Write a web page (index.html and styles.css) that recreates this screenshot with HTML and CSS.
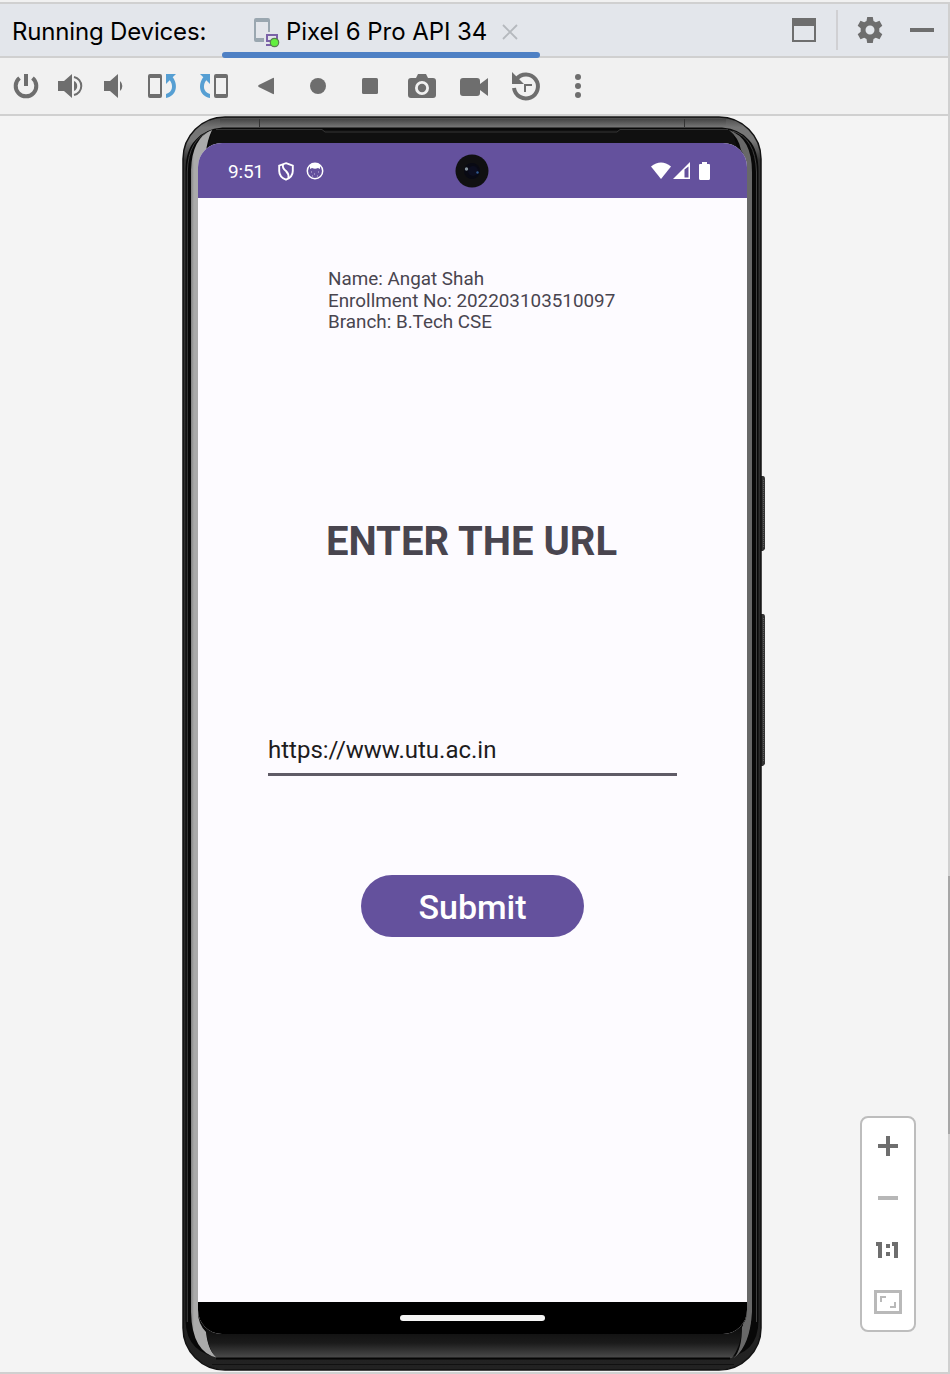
FILE: index.html
```html
<!DOCTYPE html>
<html lang="en">
<head>
<meta charset="utf-8">
<title>Running Devices</title>
<link rel="stylesheet" href="styles.css">
</head>
<body>
<div class="window">
  <header class="header">
    <span class="title">Running Devices:</span>
    <div class="tab">
      <svg class="tab-device" width="28" height="32" viewBox="0 0 28 32">
        <path d="M4 2h12a2 2 0 0 1 2 2v12h-2V6H4v16h8v4H4a2 2 0 0 1-2-2V4a2 2 0 0 1 2-2z" fill="#9aa7b0"/>
        <path d="M14 18h12v8H14zM16 20v4h8v-4zM14 28h6v2h-6z" fill="#7b62a8" fill-rule="evenodd"/>
        <circle cx="22.500" cy="26.500" r="4.200" fill="#62ef3f" stroke="#5b7c52" stroke-width="1.200"/>
      </svg>
      <span class="tab-label">Pixel 6 Pro API 34</span>
      <svg class="close" width="16" height="16" viewBox="0 0 16 16"><path d="M1 1l14 14M15 1L1 15" stroke="#b5b9be" stroke-width="1.800"/></svg>
    </div>
    <div class="header-actions">
      <svg width="24" height="24" viewBox="0 0 24 24"><path d="M0 0h24v24H0zM2 8v14h20V8z" fill="#6e6e6e" fill-rule="evenodd"/></svg>
      <span class="divider"></span>
      <svg width="28" height="28" viewBox="0 0 28 28"><path fill="#6e6e6e" fill-rule="evenodd" d="M11.200 1h5.600l.7 3.900 2.300 1.300 3.700-1.400 2.800 4.900-3 2.500v3.600l3 2.500-2.800 4.900-3.700-1.400-2.300 1.300-.7 3.900h-5.600l-.7-3.900-2.300-1.300-3.700 1.400-2.800-4.900 3-2.500v-3.600l-3-2.500 2.800-4.900 3.700 1.400 2.300-1.300zM14 9.500a4.500 4.500 0 1 0 0 9 4.500 4.500 0 0 0 0-9z"/></svg>
      <svg class="minimize" width="24" height="4" viewBox="0 0 24 4"><path d="M0 0h24v4H0z" fill="#6e6e6e"/></svg>
    </div>
  </header>

  <nav class="toolbar">
    <svg width="28" height="28" viewBox="0 0 28 28"><path d="M7.500 6A10.300 10.300 0 1 0 20.500 6" fill="none" stroke="#6e6e6e" stroke-width="4"/><path d="M12 2h4v12h-4z" fill="#6e6e6e"/></svg>
    <svg class="volume-up" width="28" height="28" viewBox="0 0 28 28"><path d="M1 9h6l8-7v24l-8-7H1zM17 9a5.500 5.500 0 0 1 0 10z" fill="#6e6e6e"/><path d="M17 5a9.200 9.200 0 0 1 0 18" fill="none" stroke="#6e6e6e" stroke-width="2"/></svg>
    <svg class="volume-down" width="28" height="28" viewBox="0 0 28 28"><path d="M4 9h6l8-7v24l-8-7H4zM20 9a6.500 6.500 0 0 1 0 10z" fill="#6e6e6e"/></svg>
    <svg class="rotate" width="30" height="28" viewBox="0 0 30 28"><path d="M3 2h10q2 0 2 2v20q0 2-2 2H3q-2 0-2-2V4q0-2 2-2zM3 6v16h10V6z" fill="#6e6e6e" fill-rule="evenodd"/><path d="M19 2h10l-3.300 3.300C31 12 30.500 24 19 26v-4c7-1.800 7.500-9 3.700-13.700L19 12z" fill="#569fd3"/></svg>
    <svg class="rotate" width="30" height="28" viewBox="0 0 30 28"><path d="M17 2h10q2 0 2 2v20q0 2-2 2H17q-2 0-2-2V4q0-2 2-2zM17 6v16h10V6z" fill="#6e6e6e" fill-rule="evenodd"/><path d="M11 2H1l3.300 3.300C-1 12-.5 24 11 26v-4C4 20.200 3.500 13 7.300 8.300L11 12z" fill="#569fd3"/></svg>
    <svg class="back" width="28" height="28" viewBox="0 0 28 28"><path d="M22 6.500v15q0 1-1 .6L6.700 15q-1.300-1 0-2L21 6q1-.5 1 .5z" fill="#6e6e6e"/></svg>
    <svg width="28" height="28" viewBox="0 0 28 28"><circle cx="14" cy="14" r="8" fill="#6e6e6e"/></svg>
    <svg width="28" height="28" viewBox="0 0 28 28"><rect x="6" y="6" width="16" height="16" rx="1.500" fill="#6e6e6e"/></svg>
    <svg width="28" height="28" viewBox="0 0 28 28"><path d="M3 6h5l2-4h8l2 4h5q3 0 3 3v14q0 3-3 3H3q-3 0-3-3V9q0-3 3-3zM14 9a7 7 0 1 0 0 14 7 7 0 0 0 0-14z" fill="#6e6e6e" fill-rule="evenodd"/><circle cx="14" cy="16" r="4.200" fill="#6e6e6e"/></svg>
    <svg width="28" height="28" viewBox="0 0 28 28"><path d="M3 6h14q3 0 3 3v3l8-6v18l-8-6v3q0 3-3 3H3q-3 0-3-3V9q0-3 3-3z" fill="#6e6e6e"/></svg>
    <svg width="28" height="28" viewBox="0 0 28 28"><path d="M4.500 7A12 12 0 1 1 2 16" fill="none" stroke="#6e6e6e" stroke-width="4"/><path d="M0 0v12h12zM12 12h8v2h-6v6h-2z" fill="#6e6e6e"/></svg>
    <svg width="28" height="28" viewBox="0 0 28 28" fill="#6e6e6e"><circle cx="14" cy="5" r="3"/><circle cx="14" cy="14" r="3"/><circle cx="14" cy="23" r="3"/></svg>
  </nav>

  <main class="stage">
    <div class="phone">
      <svg class="frame" width="584" height="1256" viewBox="182 116 584 1256">
        <defs>
          <linearGradient id="rail" x1="0" y1="0" x2="0" y2="1"><stop offset="0" stop-color="#444"/><stop offset="1" stop-color="#757575"/></linearGradient>
          <linearGradient id="chin" x1="0" y1="0" x2="0" y2="1"><stop offset="0" stop-color="#0d0d0d"/><stop offset=".5" stop-color="#1b1b1b"/><stop offset="1" stop-color="#4c4c4c"/></linearGradient>
          <linearGradient id="body" gradientUnits="userSpaceOnUse" x1="0" y1="116" x2="0" y2="1371"><stop offset="0" stop-color="#444"/><stop offset=".009" stop-color="#757575"/><stop offset=".02" stop-color="#777"/><stop offset=".035" stop-color="#333"/><stop offset="1" stop-color="#222"/></linearGradient>
          <linearGradient id="glare" gradientUnits="userSpaceOnUse" x1="190" y1="0" x2="198" y2="0"><stop offset="0" stop-color="#777"/><stop offset=".5" stop-color="#aaa"/><stop offset="1" stop-color="#aaa"/></linearGradient>
        </defs>
        <path d="M760 476h3q2 0 2 3v70l-2 2h-3zM760 614h3q2 0 2 3v147l-2 2h-3z" fill="#343434"/>
        <path d="M763.500 480v68M763.500 618v144" stroke="#606060" stroke-dasharray="1 1"/>
        <rect x="183" y="117" width="578" height="1253" rx="42" fill="url(#body)" stroke="#111" stroke-width="1.500"/>
        <path d="M220 119H726v8H220z" fill="url(#rail)"/>
        <path d="M259.500 119v8M684.500 119v8" stroke="#333"/>
        <path d="M185.500 1320V172q0-22 10-32 9-11 27-12.500H722q18 1.500 27 12.500 9.500 10 9.500 32V1320q0 35-36 38H224q-38-3-38.500-38z" fill="#080808"/>
        <path d="M187.300 1322V172q1-34 24-41M756.500 1322V172q-1-34-24-41" fill="none" stroke="#404040"/>
        <path d="M212 130H732l8 28H206z" fill="#101010"/>
        <path d="M216 129.500h106l3 2.500H617l3-2.500h108" fill="none" stroke="#353535"/>
        <path d="M191 1312V170q1-32 21-40-5 11-6 22-8 8-8 22V1312q0 12 8 20 2 20 12 26-26-5-27-46z" fill="url(#glare)"/>
        <path d="M747 1312V172q0-14-6-22-2-12-12-20 23 8 23 42V1312q-2 33-17 45 8-9 8-33 4-5 4-12z" fill="#686868"/>
        <path d="M206 1328H742q-1 18-10 30H217q-9-7-11-30z" fill="url(#chin)"/>
        <path d="M742 1327q0 22-8 31 13-11 17-38l-4-8q0 9-5 15z" fill="#686868"/>
        <path d="M216 1358.500H730" stroke="#050505" stroke-width="2"/>
        <path d="M212 1364.500H734" stroke="#111" stroke-width="1"/>
      </svg>

      <section class="screen">
        <div class="status">
          <span class="clock">9:51</span>
          <svg class="shield" width="16" height="19" viewBox="0 0 16 19" fill="none" stroke="#fff" stroke-width="1.900"><path d="M8 1.200L14.800 3.600V9q0 6-6.800 8.700Q1.200 15 1.200 9V3.600z"/><path d="M5 2.500Q4 6 8 9q3 3 2.500 7"/></svg>
          <svg class="face" width="18" height="18" viewBox="0 0 18 18"><circle cx="9" cy="9" r="7.700" fill="none" stroke="#fff" stroke-width="1.500"/><path d="M4 3Q9-.5 14 3v4l-2-1q-3 1.500-6 0L4 7z" fill="#fff"/><path d="M5 10h1M8 12h1M12 10h1M6 14h1M11 14h1" stroke="#c8bee0"/></svg>
          <svg class="camera" width="34" height="34" viewBox="0 0 34 34"><circle cx="17" cy="17" r="16.500" fill="#101012"/><circle cx="17" cy="17" r="8" fill="#090a14"/><circle cx="18" cy="17" r="5" fill="#0c0e20"/><circle cx="11.500" cy="15" r="1.700" fill="#83919b"/><circle cx="22.500" cy="18.500" r="1.200" fill="#315b92"/></svg>
          <svg class="signals" width="60" height="18" viewBox="0 0 60 18" fill="#fff"><path d="M0 4.500Q10-3.500 20 4.500L10 17z"/><path d="M39 0v17H22zM33.500 7.500V15.500H37.500V4.500z" fill-rule="evenodd"/><path d="M51 0h5v2h2q1 0 1 1v13.500q0 1.500-1.500 1.500h-8Q48 18 48 16.500V3q0-1 1-1h2z"/></svg>
        </div>
        <div class="content">
          <p class="details">Name: Angat Shah<br>Enrollment No: 202203103510097<br>Branch: B.Tech CSE</p>
          <h1 class="heading">ENTER THE URL</h1>
          <div class="field">https://www.utu.ac.in</div>
          <button class="submit">Submit</button>
        </div>
        <div class="navbar"><span class="handle"></span></div>
      </section>
    </div>

    <span class="scroll-thumb"></span>
    <aside class="zoom">
      <svg width="28" height="28" viewBox="0 0 28 28"><path d="M12 4h4v8h8v4h-8v8h-4v-8H4v-4h8z" fill="#6e6e6e"/></svg>
      <svg width="28" height="28" viewBox="0 0 28 28"><path d="M4 12h20v4H4z" fill="#b7b7b7"/></svg>
      <svg width="28" height="28" viewBox="0 0 28 28"><path d="M2 6h6v16H4V10H2zM18 6h6v16h-4V10h-2zM12 8h4v4h-4zM12 16h4v4h-4z" fill="#6e6e6e"/></svg>
      <svg width="28" height="28" viewBox="0 0 28 28"><path d="M0 2h28v24H0zM3 5v18h22V5zM6 8h6v2H8v4H6zM20 14h2v6h-6v-2h4z" fill="#b9b9b9" fill-rule="evenodd"/></svg>
    </aside>
  </main>
</div>
</body>
</html>
```
FILE: styles.css
```css
* { box-sizing: border-box; }
body { margin: 0; background: #f1f1f1; }
svg { display: block; flex: none; overflow: visible; }
.window {
  width: 950px;
  height: 1372px;
  margin-top: 2px;
  border: solid #d0d0d0;
  border-width: 2px 2px 2px 0;
  display: flex;
  flex-direction: column;
  font-family: Inter, sans-serif;
}
.header {
  height: 54px;
  flex: none;
  display: flex;
  background: #e3e6eb;
  border-bottom: 2px solid #d0d0d0;
  color: #000;
  font-size: 24px;
  line-height: 56px;
  white-space: nowrap;
}
.title { width: 210px; margin-left: 12px; letter-spacing: -.17px; }
.tab {
  position: relative;
  width: 318px;
  height: 54px;
  display: flex;
  align-items: center;
  padding-left: 30px;
}
.tab::after {
  content: "";
  position: absolute;
  left: 0;
  bottom: 0;
  width: 318px;
  height: 6px;
  border-radius: 3px;
  background: #4e80c4;
}
.tab-device { margin-top: 2px; }
.tab-label { width: 216px; margin: 2px 0 0 6px; letter-spacing: -.07px; }
.close { margin-top: 2px; }
.header-actions { flex: 1; display: flex; align-items: center; justify-content: flex-end; padding-right: 14px; }
.divider { width: 2px; height: 40px; margin: 0 18px 0 20px; background: #d0d0d3; }
.minimize { margin-left: 26px; }
.toolbar {
  height: 58px;
  flex: none;
  display: flex;
  align-items: center;
  gap: 24px;
  padding-left: 12px;
  background: #f1f1f1;
  border-bottom: 2px solid #d0d0d0;
}
.volume-up { margin-left: -7px; }
.volume-down { margin-left: -9px; }
.volume-down + .rotate { margin-left: -5px; }
.rotate + .rotate { margin-left: -2px; }
.toolbar .back { margin-left: -1px; }
.stage { position: relative; flex: 1; background: #f4f4f4; padding-left: 182px; }
.phone { position: relative; width: 584px; height: 1256px; padding: 27px 19px 38px 16px; }
.frame { position: absolute; left: 0; top: 0; }
.screen {
  position: relative;
  width: 549px;
  height: 1191px;
  display: flex;
  flex-direction: column;
  overflow: hidden;
  border-radius: 24px;
  background: #fdfbff;
  font-family: Roboto, sans-serif;
}
.status {
  height: 55px;
  flex: none;
  display: flex;
  align-items: center;
  padding-left: 30px;
  background: #64519d;
  color: #fff;
}
.clock { width: 50px; margin-top: 2px; font-size: 19px; letter-spacing: -.2px; }
.shield { margin-top: 1px; }
.face { margin-left: 12px; margin-top: 1px; }
.camera { margin-left: 131px; }
.signals { margin-left: 162px; }
.content { flex: 1; display: flex; flex-direction: column; align-items: center; padding-top: 71px; }
.details { width: 289px; margin: 0; color: #49454f; font-size: 18.850px; line-height: 21.700px; white-space: nowrap; }
.heading { margin: 180.900px 2px 0 0; color: #49454f; font-size: 40px; line-height: 54px; font-weight: 700; white-space: nowrap; }
.field {
  width: 409px;
  height: 54px;
  margin-top: 153px;
  border-bottom: 3px solid #5f5b66;
  color: #1d1b20;
  font-size: 24px;
  line-height: 56px;
}
.submit {
  width: 223px;
  height: 62px;
  margin-top: 99px;
  padding: 2px 0 0;
  border: 0;
  border-radius: 31px;
  background: #64519d;
  color: #fff;
  font: 500 34px Roboto, sans-serif;
}
.navbar { height: 32px; flex: none; display: flex; justify-content: center; align-items: center; background: #000; }
.handle { width: 145px; height: 6px; border-radius: 3px; background: #f5f5f5; }
.scroll-thumb { position: absolute; right: -2px; top: 760px; width: 2px; height: 258px; background: #a6a6a6; }
.zoom {
  position: absolute;
  left: 860px;
  top: 1000px;
  width: 56px;
  height: 216px;
  display: flex;
  flex-direction: column;
  align-items: center;
  gap: 24px;
  padding-top: 14px;
  border: 2px solid #bdbdbd;
  border-radius: 8px;
  background: #fff;
}
```
